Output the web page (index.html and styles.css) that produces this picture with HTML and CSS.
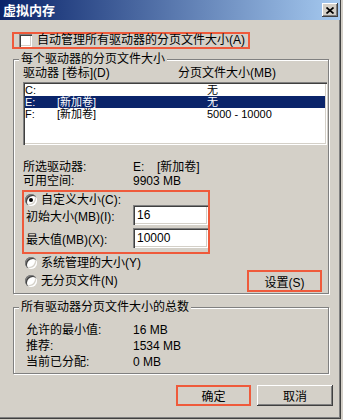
FILE: index.html
```html
<!DOCTYPE html>
<html lang="zh-CN">
<head>
    <meta charset="UTF-8">
    <meta name="viewport" content="width=device-width, initial-scale=1.0">
    <title>虚拟内存</title>
    <link rel="stylesheet" href="styles.css">
</head>
<body>
    <div class="window">
        <div class="titlebar">
            <span class="title">虚拟内存</span>
            <span class="close-btn">
                <svg width="8" height="7" viewBox="0 0 8 7"><path d="M0.5 0.5 L7.5 6.5 M7.5 0.5 L0.5 6.5" stroke="#000" stroke-width="1.7" fill="none"/></svg>
            </span>
        </div>

        <div class="auto-row">
            <span class="checkbox"></span>
            <span>自动管理所有驱动器的分页文件大小(A)</span>
        </div>

        <fieldset class="group group-drives">
            <legend>每个驱动器的分页文件大小</legend>
            <div class="list-head">
                <span class="head-drive">驱动器 [卷标](D)</span>
                <span>分页文件大小(MB)</span>
            </div>
            <div class="listbox">
                <div class="list-row"><span class="c-drive">C:</span><span class="c-label"></span><span>无</span></div>
                <div class="list-row selected"><span class="c-drive">E:</span><span class="c-label">[新加卷]</span><span>无</span></div>
                <div class="list-row"><span class="c-drive">F:</span><span class="c-label">[新加卷]</span><span>5000 - 10000</span></div>
            </div>

            <div class="info">
                <div class="info-row"><span class="info-label">所选驱动器:</span><span class="v-drive">E:</span><span>[新加卷]</span></div>
                <div class="info-row"><span class="info-label">可用空间:</span><span>9903 MB</span></div>
            </div>

            <div class="custom-box">
                <div class="radio-row">
                    <span class="radio checked"></span>
                    <span>自定义大小(C):</span>
                </div>
                <div class="input-row first">
                    <span class="input-label">初始大小(MB)(I):</span>
                    <span class="textbox">16</span>
                </div>
                <div class="input-row">
                    <span class="input-label">最大值(MB)(X):</span>
                    <span class="textbox">10000</span>
                </div>
            </div>

            <div class="radio-row sys-row">
                <span class="radio"></span>
                <span>系统管理的大小(Y)</span>
            </div>
            <div class="bottom-row">
                <div class="radio-row">
                    <span class="radio"></span>
                    <span>无分页文件(N)</span>
                </div>
                <button class="btn set-btn marked">设置(S)</button>
            </div>
        </fieldset>

        <fieldset class="group group-total">
            <legend>所有驱动器分页文件大小的总数</legend>
            <div class="total-rows">
                <div class="info-row"><span class="info-label">允许的最小值:</span><span>16 MB</span></div>
                <div class="info-row"><span class="info-label">推荐:</span><span>1534 MB</span></div>
                <div class="info-row"><span class="info-label">当前已分配:</span><span>0 MB</span></div>
            </div>
        </fieldset>

        <div class="actions">
            <button class="btn ok-btn marked">确定</button>
            <button class="btn cancel-btn">取消</button>
        </div>
    </div>
</body>
</html>
```

FILE: styles.css
```css
* {
    box-sizing: border-box;
}
body {
    margin: 0;
    background-color: #d4d0c8;
    font-family: "Liberation Sans", "Noto Sans CJK SC", sans-serif;
    font-size: 12px;
    color: #000;
}
.window {
    width: 341px;
    height: 419px;
    border-right: 1px solid #404040;
    border-bottom: 1px solid #404040;
    box-shadow: inset -1px -1px 0 #808080;
}

/* title bar */
.titlebar {
    height: 20px;
    padding: 0 2px 0 3px;
    display: flex;
    align-items: center;
    justify-content: space-between;
    background: linear-gradient(to right, #0a246a, #a6caf0);
}
.title {
    color: #fff;
    font-weight: bold;
    font-size: 13px;
    line-height: 15px;
}
.close-btn {
    width: 16px;
    height: 14px;
    display: flex;
    align-items: center;
    justify-content: center;
    background-color: #d4d0c8;
    box-shadow: inset -1px -1px 0 #404040, inset 1px 1px 0 #fff, inset -2px -2px 0 #808080;
}
.close-btn svg {
    display: block;
    margin: 1px 0 0 0;
}

/* auto manage checkbox */
.auto-row {
    margin: 12px 0 0 12px;
    width: 238px;
    height: 17px;
    border: 2px solid #ef5a3b;
    padding-left: 5px;
    display: flex;
    align-items: center;
    gap: 5px;
    line-height: 13px;
}
.checkbox {
    width: 13px;
    height: 13px;
    background-color: #fff;
    box-shadow: inset 1px 1px 0 #808080, inset 2px 2px 0 #404040, inset -1px -1px 0 #fff, inset -2px -2px 0 #d4d0c8;
}

/* group boxes */
.group {
    margin: 0 0 0 13px;
    width: 316px;
    min-width: 0;
    padding: 0;
    border: 1px solid #808080;
    box-shadow: 1px 1px 0 #fff, inset 1px 1px 0 #fff;
}
.group legend {
    margin-left: 5px;
    padding: 0 2px;
    line-height: 13px;
    background-color: #d4d0c8;
}
.group-drives {
    margin-top: 4px;
    padding-bottom: 1px;
}
.group-total {
    margin-top: 7px;
    padding-bottom: 3px;
}

.list-head {
    display: flex;
    margin: 1px 0 0 9px;
    line-height: 13px;
}
.head-drive {
    width: 155px;
}
.listbox {
    margin: 2px 0 0 9px;
    width: 304px;
    height: 63px;
    padding: 2px;
    background-color: #fff;
    box-shadow: inset 1px 1px 0 #808080, inset 2px 2px 0 #404040, inset -1px -1px 0 #fff, inset -2px -2px 0 #d4d0c8;
}
.list-row {
    display: flex;
    height: 12px;
    line-height: 12px;
    font-size: 11px;
}
.list-row.selected {
    background-color: #0a246a;
    color: #fff;
}
.c-drive {
    width: 32px;
}
.c-label {
    width: 150px;
}

.info {
    margin: 15px 0 0 9px;
}
.info-row {
    display: flex;
    line-height: 14px;
}
.info-label {
    width: 110px;
}
.v-drive {
    width: 24px;
}

/* custom size box */
.custom-box {
    margin: 2px 0 0 8px;
    width: 188px;
    height: 64px;
    border: 2px solid #ef5a3b;
}
.radio-row {
    display: flex;
    align-items: center;
    gap: 4px;
    height: 12px;
    line-height: 12px;
}
.custom-box .radio-row {
    margin-top: 2px;
    padding-left: 1px;
}
.radio {
    width: 12px;
    height: 12px;
    border-radius: 50%;
    background-color: #fff;
    box-shadow: inset 1px 1px 0 #808080, inset 2px 2px 0 #404040, inset -1px -1px 0 #fff, inset -2px -2px 0 #d4d0c8;
    display: flex;
    align-items: center;
    justify-content: center;
}
.radio.checked::after {
    content: "";
    width: 4px;
    height: 4px;
    border-radius: 50%;
    background-color: #000;
}
.input-row {
    display: flex;
    align-items: center;
    margin-top: 3px;
    padding-left: 2px;
}
.input-row.first {
    margin-top: -1px;
}
.input-label {
    width: 107px;
}
.textbox {
    width: 75px;
    height: 20px;
    padding: 0 4px;
    line-height: 20px;
    background-color: #fff;
    box-shadow: inset 1px 1px 0 #808080, inset 2px 2px 0 #404040, inset -1px -1px 0 #fff, inset -2px -2px 0 #d4d0c8;
}

.sys-row {
    margin: 3px 0 0 11px;
}
.bottom-row {
    margin: 1px 6px 0 11px;
    height: 22px;
    display: flex;
    align-items: center;
    justify-content: space-between;
}

/* buttons */
.btn {
    font-family: inherit;
    font-size: 12px;
    color: #000;
    padding: 0;
    border: none;
    background-color: #d4d0c8;
    box-shadow: inset -1px -1px 0 #404040, inset 1px 1px 0 #fff, inset -2px -2px 0 #808080;
}
.marked {
    outline: 2px solid #ef5a3b;
    outline-offset: -2px;
}
.set-btn {
    width: 75px;
    height: 22px;
}

.total-rows {
    margin: 8px 0 0 12px;
}
.total-rows .info-row {
    line-height: 16px;
}
.total-rows .info-label {
    width: 107px;
}

.actions {
    margin-top: 11px;
    padding-right: 7px;
    display: flex;
    justify-content: flex-end;
    gap: 6px;
}
.ok-btn {
    width: 75px;
    height: 21px;
}
.cancel-btn {
    width: 76px;
    height: 21px;
}
```
